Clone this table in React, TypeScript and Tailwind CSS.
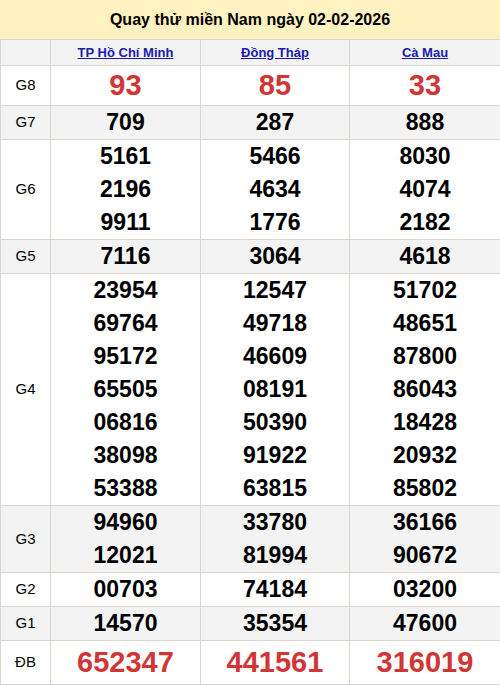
const provinces = ['TP Hồ Chí Minh', 'Đồng Tháp', 'Cà Mau'];

type Row = { label: string; values: string[][]; big?: boolean; lineH: string };

const rows: Row[] = [
  { label: 'G8', values: [['93'], ['85'], ['33']], big: true, lineH: 'h-[39px] leading-[39px]' },
  { label: 'G7', values: [['709'], ['287'], ['888']], lineH: 'h-[33px] leading-[33px]' },
  {
    label: 'G6',
    values: [
      ['5161', '2196', '9911'],
      ['5466', '4634', '1776'],
      ['8030', '4074', '2182'],
    ],
    lineH: 'h-[33px] leading-[33px]',
  },
  { label: 'G5', values: [['7116'], ['3064'], ['4618']], lineH: 'h-[33px] leading-[33px]' },
  {
    label: 'G4',
    values: [
      ['23954', '69764', '95172', '65505', '06816', '38098', '53388'],
      ['12547', '49718', '46609', '08191', '50390', '91922', '63815'],
      ['51702', '48651', '87800', '86043', '18428', '20932', '85802'],
    ],
    lineH: 'h-[33px] leading-[33px]',
  },
  {
    label: 'G3',
    values: [
      ['94960', '12021'],
      ['33780', '81994'],
      ['36166', '90672'],
    ],
    lineH: 'h-[33px] leading-[33px]',
  },
  { label: 'G2', values: [['00703'], ['74184'], ['03200']], lineH: 'h-[33px] leading-[33px]' },
  { label: 'G1', values: [['14570'], ['35354'], ['47600']], lineH: 'h-[33px] leading-[33px]' },
  { label: 'ĐB', values: [['652347'], ['441561'], ['316019']], big: true, lineH: 'h-[43px] leading-[43px]' },
];

export default function App() {
  return (
    <div className="w-[500px] bg-white font-['Liberation_Sans',Arial,sans-serif] text-black">
      <div className="flex h-[39px] items-center justify-center bg-[#fff2c1] text-[16px] font-bold">
        Quay thử miền Nam ngày 02-02-2026
      </div>
      <table className="w-[500px] table-fixed border-collapse">
        <colgroup>
          <col className="w-[50px]" />
          <col className="w-[150px]" />
          <col className="w-[149px]" />
          <col className="w-[151px]" />
        </colgroup>
        <thead>
          <tr className="bg-[#f3f3f3]">
            <th className="h-[26px] border border-[#ddd6d0] p-0"></th>
            {provinces.map((p) => (
              <th key={p} className="h-[26px] border border-[#ddd6d0] p-0 text-[13px] font-bold">
                <a href="#" className="text-[#1a1ab0] underline">
                  {p}
                </a>
              </th>
            ))}
          </tr>
        </thead>
        <tbody>
          {rows.map((row, i) => (
            <tr key={row.label} className={i % 2 === 1 ? 'bg-[#f3f3f3]' : 'bg-white'}>
              <td className="border border-[#ddd6d0] p-0 text-center text-[15px]">{row.label}</td>
              {row.values.map((vals, j) => (
                <td key={j} className="border border-[#ddd6d0] p-0 text-center">
                  {vals.map((v) => (
                    <div
                      key={v}
                      className={`${row.lineH} font-bold ${
                        row.big ? 'text-[29px] text-[#d13636]' : 'text-[23px]'
                      }`}
                    >
                      {v}
                    </div>
                  ))}
                </td>
              ))}
            </tr>
          ))}
        </tbody>
      </table>
    </div>
  );
}
